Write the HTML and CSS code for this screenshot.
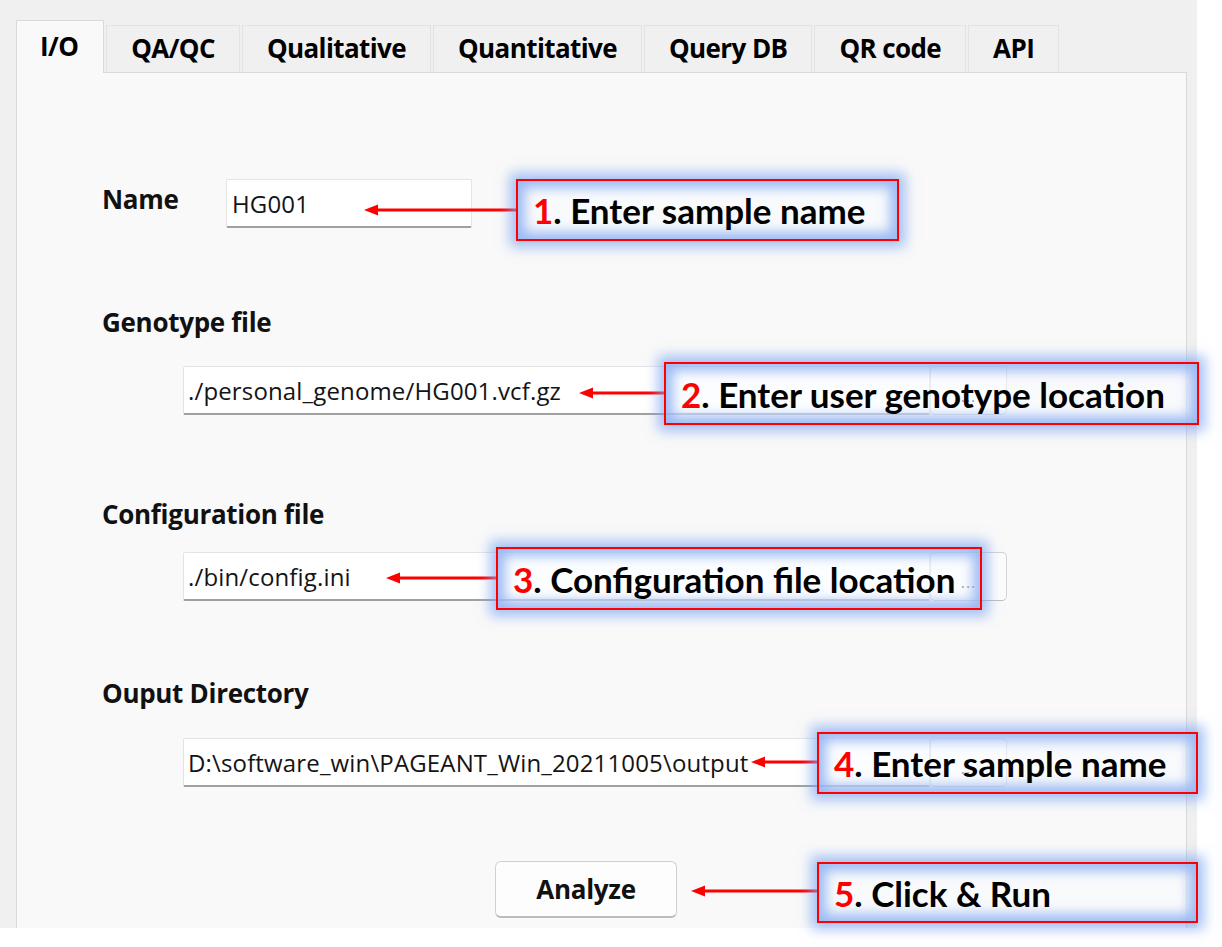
FILE: index.html
```html
<!DOCTYPE html>
<html>
<head>
<meta charset="utf-8">
<title>PAGEANT I/O</title>
<link rel="stylesheet" href="styles.css">
</head>
<body>
<div class="page">
  <div class="app">
    <div class="tabs">
      <div class="tab active">I/O</div>
      <div class="tab">QA/QC</div>
      <div class="tab">Qualitative</div>
      <div class="tab">Quantitative</div>
      <div class="tab">Query DB</div>
      <div class="tab">QR code</div>
      <div class="tab">API</div>
    </div>
    <div class="panel">
      <div class="name-row">
        <div class="label name-label">Name</div>
        <div class="input name-input">HG001</div>
      </div>
      <div class="field f-geno">
        <div class="label">Genotype file</div>
        <div class="path-row">
          <div class="input path">./personal_genome/HG001.vcf.gz</div>
          <div class="browse">...</div>
        </div>
      </div>
      <div class="field f-conf">
        <div class="label">Configuration file</div>
        <div class="path-row">
          <div class="input path">./bin/config.ini</div>
          <div class="browse">...</div>
        </div>
      </div>
      <div class="field f-out">
        <div class="label">Ouput Directory</div>
        <div class="path-row">
          <div class="input path">D:\software_win\PAGEANT_Win_20211005\output</div>
          <div class="browse">...</div>
        </div>
      </div>
      <div class="actions">
        <div class="btn">Analyze</div>
      </div>
    </div>
  </div>

  <svg class="arrows" width="1222" height="947" viewBox="0 0 1222 947">
    <g stroke="#ff0000" stroke-width="3">
      <line x1="517" y1="210" x2="376" y2="210"/>
      <line x1="665" y1="393" x2="591" y2="393"/>
      <line x1="497" y1="578" x2="398" y2="578"/>
      <line x1="818" y1="762" x2="763" y2="762"/>
      <line x1="818" y1="891" x2="703" y2="891"/>
    </g>
    <g fill="#ff0000">
      <polygon points="364,210 378,204.5 378,215.5"/>
      <polygon points="579,393 593,387.5 593,398.5"/>
      <polygon points="386,578 400,572.5 400,583.5"/>
      <polygon points="751,762 765,756.5 765,767.5"/>
      <polygon points="691,891 705,885.5 705,896.5"/>
    </g>
  </svg>

  <div class="note n1"><span class="num">1</span>. Enter sample name</div>
  <div class="note n2"><span class="num">2</span>. Enter user genotype location</div>
  <div class="note n3"><span class="num">3</span>. Configuration file location</div>
  <div class="note n4"><span class="num">4</span>. Enter sample name</div>
  <div class="note n5"><span class="num">5</span>. Click &amp; Run</div>
</div>
</body>
</html>
```

FILE: styles.css
```css
html, body {
  margin: 0;
  padding: 0;
  background: #ffffff;
}

.page {
  position: relative;
  width: 1222px;
  height: 947px;
  overflow: hidden;
  background: #ffffff;
}

.app {
  width: 1197px;
  height: 928px;
  background: #f0f0f0;
  overflow: hidden;
}

/* ---------- tabs ---------- */
.tabs {
  display: flex;
  align-items: flex-end;
  gap: 2px;
  padding: 20px 0 0 16px;
  height: 72px;
  box-sizing: border-box;
}

.tab {
  height: 47px;
  padding: 0 24px 2px;
  box-sizing: border-box;
  display: flex;
  align-items: center;
  justify-content: center;
  background: #f0f0f0;
  border: 1px solid #e3e3e3;
  border-bottom: none;
  font-family: "Open Sans", "DejaVu Sans", sans-serif;
  font-weight: 700;
  font-size: 26px;
  color: #000;
  letter-spacing: -0.6px;
}

.tab.active {
  height: 53px;
  margin-bottom: -1px;
  background: #f9f9f9;
  border-color: #d9d9d9;
  position: relative;
  z-index: 1;
  padding: 0 25px 3px 23px;
}

/* ---------- panel ---------- */
.panel {
  margin-left: 16px;
  width: 1171px;
  height: 900px;
  box-sizing: border-box;
  background: #f9f9f9;
  border: 1px solid #d9d9d9;
  padding: 106px 0 0 85px;
}

.label {
  font-family: "Open Sans", "DejaVu Sans", sans-serif;
  font-weight: 700;
  font-size: 26px;
  line-height: 34px;
  height: 34px;
  color: #111;
  letter-spacing: -0.3px;
}

.name-row {
  display: flex;
  align-items: flex-start;
}

.name-label {
  width: 124px;
  margin-top: 3px;
}

.input {
  height: 49px;
  box-sizing: border-box;
  background: #ffffff;
  border: 1px solid #e4e4e4;
  border-bottom: 2px solid #a0a0a0;
  border-radius: 2px;
  display: flex;
  align-items: center;
  padding: 0 4px;
  font-family: "Open Sans", "DejaVu Sans", sans-serif;
  font-weight: 400;
  font-size: 24px;
  color: #141414;
  letter-spacing: 0.15px;
  white-space: nowrap;
  overflow: hidden;
}

.name-input {
  width: 246px;
  padding-left: 5px;
}

.field.f-geno { margin-top: 77px; }
.field.f-conf { margin-top: 82px; }
.field.f-out  { margin-top: 75px; }

.f-geno .path-row { margin-top: 27px; }
.f-conf .path-row { margin-top: 21px; }
.f-out  .path-row { margin-top: 28px; }

.path-row {
  display: flex;
  margin-left: 81px;
}

.path {
  width: 747px;
  border-radius: 2px 0 0 2px;
}

.browse {
  width: 77px;
  height: 49px;
  box-sizing: border-box;
  background: #fcfcfc;
  border: 1px solid #d2d2d2;
  border-bottom-color: #bdbdbd;
  border-radius: 5px;
  display: flex;
  align-items: center;
  justify-content: center;
  padding-top: 10px;
  font-family: "Open Sans", sans-serif;
  font-size: 16px;
  color: #1a2a60;
  letter-spacing: 1px;
}

.actions {
  margin-top: 74px;
  padding-left: 393px;
}

.btn {
  width: 182px;
  height: 57px;
  box-sizing: border-box;
  background: #fdfdfd;
  border: 1px solid #d0d0d0;
  border-bottom: 2px solid #bcbcbc;
  border-radius: 6px;
  display: flex;
  align-items: center;
  justify-content: center;
  font-family: "Open Sans", "DejaVu Sans", sans-serif;
  font-weight: 700;
  font-size: 26px;
  color: #111;
  letter-spacing: -0.3px;
}

/* ---------- annotations ---------- */
.arrows {
  position: absolute;
  left: 0;
  top: 0;
  pointer-events: none;
}

.note {
  position: absolute;
  box-sizing: border-box;
  border: 2px solid #ff0000;
  background: rgba(250, 251, 255, 0.55);
  box-shadow:
    0 0 12px 6px rgba(125, 165, 242, 0.7),
    inset 0 0 12px 7px rgba(125, 165, 242, 0.75);
  display: flex;
  align-items: center;
  padding-left: 15px;
  font-family: "Lato", "Open Sans", sans-serif;
  font-weight: 700;
  font-size: 35px;
  color: #000;
  white-space: nowrap;
}

.note .num {
  color: #ff0000;
}

.n1 { left: 516px; top: 179px; width: 383px; height: 62px; }
.n2 { left: 664px; top: 362px; width: 535px; height: 63px; }
.n3 { left: 496px; top: 547px; width: 486px; height: 63px; }
.n4 { left: 817px; top: 732px; width: 381px; height: 62px; }
.n5 { left: 817px; top: 862px; width: 381px; height: 61px; }
```
